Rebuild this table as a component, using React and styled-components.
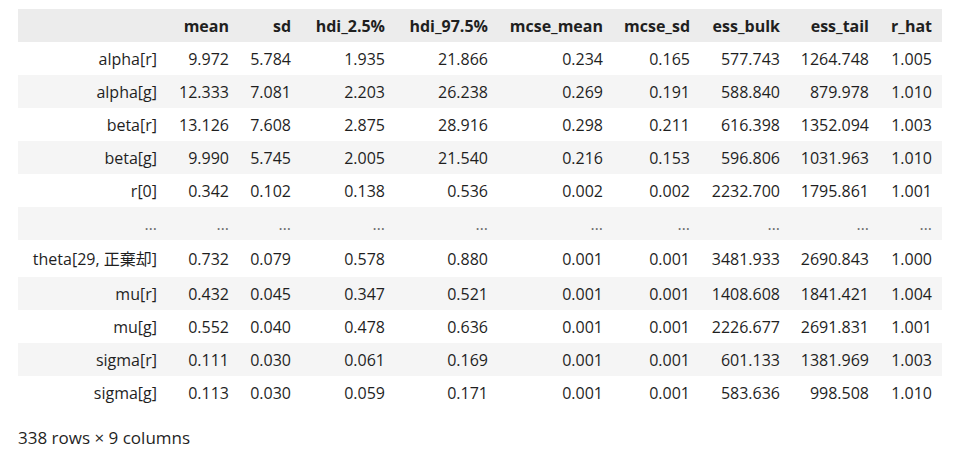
import React from 'react';
import styled, { createGlobalStyle } from 'styled-components';

const GlobalStyle = createGlobalStyle`
  body {
    margin: 0;
    background: #ffffff;
    font-family: "Open Sans", "Noto Sans CJK JP", sans-serif;
    color: #1f1f1f;
  }
`;

const columns = [
  { key: 'index', label: '', width: 149 },
  { key: 'mean', label: 'mean', width: 72 },
  { key: 'sd', label: 'sd', width: 62 },
  { key: 'hdi_lo', label: 'hdi_2.5%', width: 94 },
  { key: 'hdi_hi', label: 'hdi_97.5%', width: 103 },
  { key: 'mcse_mean', label: 'mcse_mean', width: 115 },
  { key: 'mcse_sd', label: 'mcse_sd', width: 87 },
  { key: 'ess_bulk', label: 'ess_bulk', width: 90 },
  { key: 'ess_tail', label: 'ess_tail', width: 89 },
  { key: 'r_hat', label: 'r_hat', width: 63 },
];

const rows = [
  ['alpha[r]', '9.972', '5.784', '1.935', '21.866', '0.234', '0.165', '577.743', '1264.748', '1.005'],
  ['alpha[g]', '12.333', '7.081', '2.203', '26.238', '0.269', '0.191', '588.840', '879.978', '1.010'],
  ['beta[r]', '13.126', '7.608', '2.875', '28.916', '0.298', '0.211', '616.398', '1352.094', '1.003'],
  ['beta[g]', '9.990', '5.745', '2.005', '21.540', '0.216', '0.153', '596.806', '1031.963', '1.010'],
  ['r[0]', '0.342', '0.102', '0.138', '0.536', '0.002', '0.002', '2232.700', '1795.861', '1.001'],
  null,
  ['theta[29, 正棄却]', '0.732', '0.079', '0.578', '0.880', '0.001', '0.001', '3481.933', '2690.843', '1.000'],
  ['mu[r]', '0.432', '0.045', '0.347', '0.521', '0.001', '0.001', '1408.608', '1841.421', '1.004'],
  ['mu[g]', '0.552', '0.040', '0.478', '0.636', '0.001', '0.001', '2226.677', '2691.831', '1.001'],
  ['sigma[r]', '0.111', '0.030', '0.061', '0.169', '0.001', '0.001', '601.133', '1381.969', '1.003'],
  ['sigma[g]', '0.113', '0.030', '0.059', '0.171', '0.001', '0.001', '583.636', '998.508', '1.010'],
];

const Output = styled.div`
  padding: 9px 0 0 18px;
`;

const Table = styled.table`
  border-collapse: collapse;
  border-spacing: 0;
  table-layout: fixed;
  width: 924px;
  font-size: 16px;
`;

const Col = styled.col`
  width: ${(p) => p.$w}px;
`;

const HeadRow = styled.tr`
  height: 33px;
  background: #ececec;
`;

const BodyRow = styled.tr`
  height: ${(p) => (p.$tall ? 37 : 33)}px;
  background: ${(p) => (p.$striped ? '#f5f5f5' : '#ffffff')};
`;

const HeadCell = styled.th`
  padding: 0 10px 0 8px;
  text-align: right;
  font-weight: 700;
  white-space: nowrap;
  vertical-align: middle;
  line-height: 20px;
`;

const IndexCell = styled.th`
  padding: 0 10px 0 8px;
  text-align: right;
  font-weight: 400;
  white-space: nowrap;
  vertical-align: middle;
  line-height: 20px;
  color: ${(p) => (p.$muted ? '#6a6a6a' : 'inherit')};
`;

const Cell = styled.td`
  padding: 0 10px 0 8px;
  text-align: right;
  white-space: nowrap;
  vertical-align: middle;
  line-height: 20px;
  color: ${(p) => (p.$muted ? '#6a6a6a' : 'inherit')};
`;

const Footer = styled.p`
  margin: 18px 0 0;
  font-size: 17px;
  line-height: 22px;
`;

export default function App() {
  return (
    <Output>
      <GlobalStyle />
      <Table>
        <colgroup>
          {columns.map((c) => (
            <Col key={c.key} $w={c.width} />
          ))}
        </colgroup>
        <thead>
          <HeadRow>
            {columns.map((c) => (
              <HeadCell key={c.key}>{c.label}</HeadCell>
            ))}
          </HeadRow>
        </thead>
        <tbody>
          {rows.map((r, i) =>
            r ? (
              <BodyRow key={i} $striped={i % 2 === 1} $tall={r[0].startsWith('theta')}>
                <IndexCell>{r[0]}</IndexCell>
                {r.slice(1).map((v, j) => (
                  <Cell key={j}>{v}</Cell>
                ))}
              </BodyRow>
            ) : (
              <BodyRow key={i} $striped={i % 2 === 1}>
                <IndexCell $muted>…</IndexCell>
                {columns.slice(1).map((c) => (
                  <Cell key={c.key} $muted>…</Cell>
                ))}
              </BodyRow>
            )
          )}
        </tbody>
      </Table>
      <Footer>338 rows × 9 columns</Footer>
    </Output>
  );
}
